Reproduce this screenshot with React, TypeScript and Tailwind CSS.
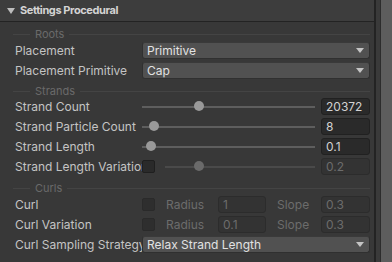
import React from "react";

const font = { fontFamily: "Inter, 'Noto Sans', sans-serif" };

const Caret = ({ className = "" }: { className?: string }) => (
  <svg width="8" height="5" viewBox="0 0 8 5" className={className}>
    <path d="M0 0 H8 L4 5 Z" fill="#c4c4c4" />
  </svg>
);

const Section = ({ title, tall }: { title: string; tall?: boolean }) => (
  <div className={`flex items-center pl-[13px] ${tall ? "h-[18px] pt-[6px]" : "h-[16px] pt-[6px]"}`}>
    <div className="h-px w-[17px] bg-[#444444]" />
    <span className="px-[5px] text-[11px] leading-none text-[#6a6a6a]">{title}</span>
    <div className="h-px flex-1 bg-[#444444]" />
  </div>
);

const Row = ({ label, children }: { label: string; children: React.ReactNode }) => (
  <div className="flex h-[20px] items-start pt-[2px]">
    <div className="w-[142px] shrink-0 overflow-hidden whitespace-nowrap pl-[15px] pr-px text-[12px] leading-[17px] text-[#c4c4c4]">
      {label}
    </div>
    <div className="flex h-[17px] flex-1 items-center">{children}</div>
  </div>
);

const Dropdown = ({ value }: { value: string }) => (
  <div className="flex h-[17px] flex-1 items-center justify-between rounded-[3px] border border-[#303030] border-t-[#3a3a3a] bg-[#515151] pl-[4px] pr-[5px]">
    <span className="text-[12px] leading-none text-[#e2e2e2]">{value}</span>
    <Caret />
  </div>
);

const NumField = ({ value, disabled, w = "w-[49px]" }: { value: string; disabled?: boolean; w?: string }) => (
  <div
    className={`flex h-[17px] ${w} shrink-0 items-center rounded-[3px] border pl-[4px] text-[12px] leading-none ${
      disabled ? "border-[#2c2c2c] bg-[#333333] text-[#6c6c6c]" : "border-[#212121] bg-[#2a2a2a] text-[#d2d2d2]"
    }`}
  >
    {value}
  </div>
);

const Check = ({ dim }: { dim?: boolean }) => (
  <div className={`h-[13px] w-[13px] shrink-0 rounded-[2px] border ${dim ? "border-[#2a2a2a] bg-[#2e2e2e]" : "border-[#1f1f1f] bg-[#2a2a2a]"}`} />
);

const Slider = ({ thumb, dim }: { thumb: number; dim?: boolean }) => (
  <div className="relative h-[17px] flex-1">
    <div className={`absolute left-0 right-0 top-[8px] h-[2px] ${dim ? "bg-[#4a4a4a]" : "bg-[#5e5e5e]"}`} />
    <div
      className={`absolute top-[3px] h-[10px] w-[10px] rounded-full ${dim ? "bg-[#6a6a6a]" : "bg-[#999999]"}`}
      style={{ left: thumb - 5 }}
    />
  </div>
);

export default function App() {
  return (
    <div className="flex h-[262px] w-[392px] overflow-hidden bg-[#383838]" style={font}>
      <div className="w-[374px] shrink-0">
        <div className="flex h-[22px] items-center border-b border-[#232323] bg-[#3d3d3d] pl-[7px]">
          <svg width="8" height="6" viewBox="0 0 8 6">
            <path d="M0 0 H8 L4 6 Z" fill="#bdbdbd" />
          </svg>
          <span className="ml-[5px] text-[11px] font-bold leading-none tracking-[-0.4px] text-[#d4d4d4]">
            Settings Procedural
          </span>
        </div>

        <div className="pr-[4px]">
          <Section title="Roots" tall />
          <Row label="Placement">
            <Dropdown value="Primitive" />
          </Row>
          <Row label="Placement Primitive">
            <Dropdown value="Cap" />
          </Row>

          <Section title="Strands" />
          <Row label="Strand Count">
            <Slider thumb={57} />
            <div className="w-[6px]" />
            <NumField value="20372" />
          </Row>
          <Row label="Strand Particle Count">
            <Slider thumb={12} />
            <div className="w-[6px]" />
            <NumField value="8" />
          </Row>
          <Row label="Strand Length">
            <Slider thumb={9} />
            <div className="w-[6px]" />
            <NumField value="0.1" />
          </Row>
          <Row label="Strand Length Variation">
            <Check />
            <div className="w-[10px]" />
            <Slider thumb={34} dim />
            <div className="w-[6px]" />
            <NumField value="0.2" disabled />
          </Row>

          <Section title="Curls" tall />
          <Row label="Curl">
            <Check dim />
            <span className="ml-[11px] w-[52px] text-[12px] text-[#6c6c6c]">Radius</span>
            <NumField value="1" disabled w="w-[48px]" />
            <span className="ml-[11px] w-[44px] text-[12px] text-[#6c6c6c]">Slope</span>
            <NumField value="0.3" disabled />
          </Row>
          <Row label="Curl Variation">
            <Check dim />
            <span className="ml-[11px] w-[52px] text-[12px] text-[#6c6c6c]">Radius</span>
            <NumField value="0.1" disabled w="w-[48px]" />
            <span className="ml-[11px] w-[44px] text-[12px] text-[#6c6c6c]">Slope</span>
            <NumField value="0.3" disabled />
          </Row>
          <Row label="Curl Sampling Strategy">
            <Dropdown value="Relax Strand Length" />
          </Row>
        </div>
      </div>
      <div className="w-[2px] bg-[#232323]" />
      <div className="w-[4px] bg-[#3a3a3a]" />
      <div className="w-px bg-[#2c2c2c]" />
      <div className="flex-1 bg-[#5d5d5d]" />
    </div>
  );
}
